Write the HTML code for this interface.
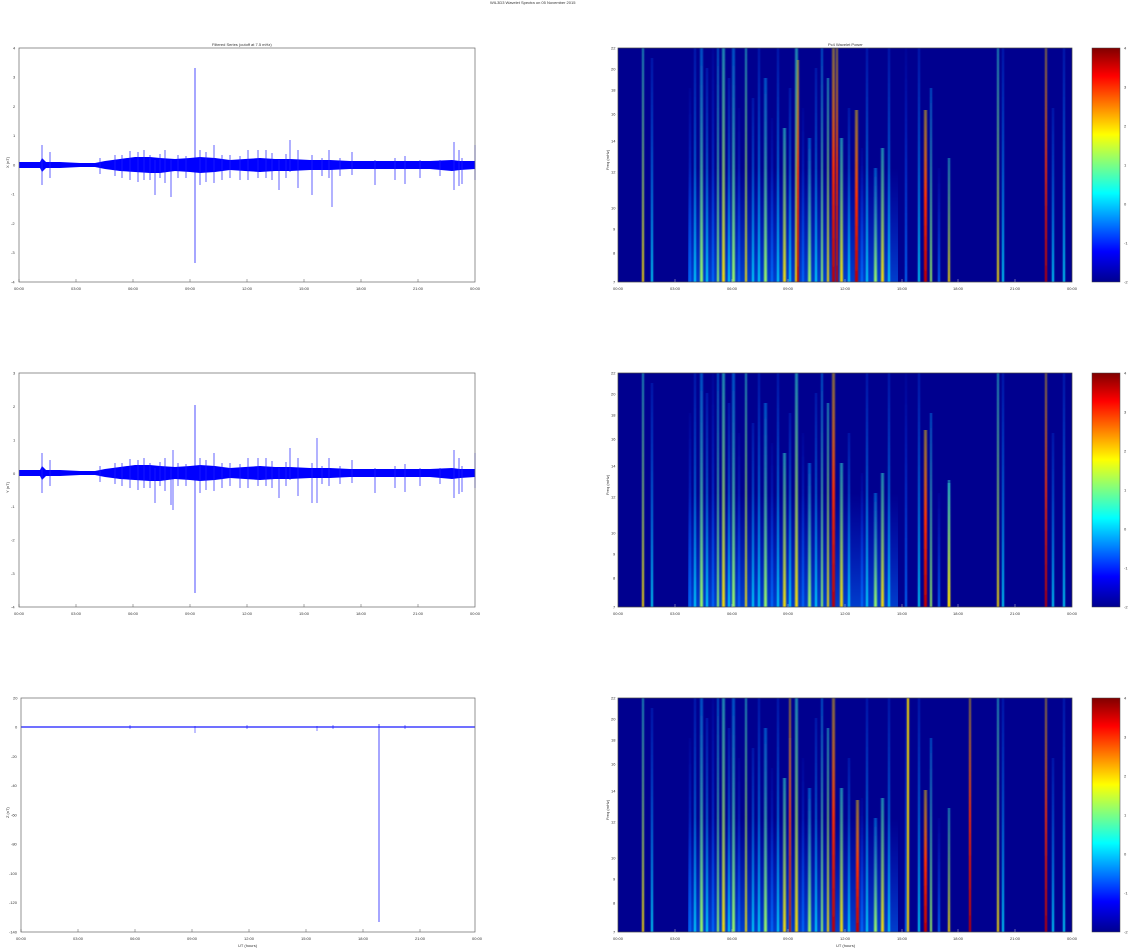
<!DOCTYPE html>
<html><head><meta charset="utf-8"><style>
html,body{margin:0;padding:0;background:#fff;width:1140px;height:949px;overflow:hidden}
svg text{font-family:"Liberation Sans",sans-serif;font-size:4px;fill:#333}
</style></head><body>
<svg width="1140" height="949" xmlns="http://www.w3.org/2000/svg">
<defs>
<filter id="bl" x="-0.05" y="0" width="1.1" height="1"><feGaussianBlur stdDeviation="0.7 0"/></filter>
<linearGradient id="cb" x1="0" y1="0" x2="0" y2="1">
<stop offset="0" stop-color="#800000"/><stop offset="0.12" stop-color="#ff0000"/><stop offset="0.37" stop-color="#ffff00"/><stop offset="0.62" stop-color="#00ffff"/><stop offset="0.87" stop-color="#0000ff"/><stop offset="1" stop-color="#00008f"/>
</linearGradient>
<linearGradient id="haze" x1="0" y1="0" x2="0" y2="1"><stop offset="0" stop-color="#0040ff" stop-opacity="0"/><stop offset="1" stop-color="#0070ff" stop-opacity="0.55"/></linearGradient>
<linearGradient id="gb" x1="0" y1="0" x2="0" y2="1"><stop offset="0" stop-color="#0040ff" stop-opacity="0.1"/><stop offset="1" stop-color="#0070ff"/></linearGradient>
<linearGradient id="gc" x1="0" y1="0" x2="0" y2="1"><stop offset="0" stop-color="#0060ff" stop-opacity="0.3"/><stop offset="1" stop-color="#00e0ff"/></linearGradient>
<linearGradient id="gg" x1="0" y1="0" x2="0" y2="1"><stop offset="0" stop-color="#00a0ff" stop-opacity="0.5"/><stop offset="1" stop-color="#a0ff60"/></linearGradient>
<linearGradient id="gy" x1="0" y1="0" x2="0" y2="1"><stop offset="0" stop-color="#30e0d0" stop-opacity="0.6"/><stop offset="1" stop-color="#ffe000"/></linearGradient>
<linearGradient id="gr" x1="0" y1="0" x2="0" y2="1"><stop offset="0" stop-color="#ffd000" stop-opacity="0.5"/><stop offset="0.5" stop-color="#ff3000"/><stop offset="1" stop-color="#c00000"/></linearGradient>
<g id="st">
<rect x="618" y="0" width="454" height="234" fill="#00008f"/>
<rect x="688" y="120" width="210" height="114" fill="url(#haze)"/>
<g filter="url(#bl)" opacity="0.95">
<rect x="642" y="0" width="2" height="234" fill="url(#gy)"/>
<rect x="651" y="10" width="2" height="224" fill="url(#gc)"/>
<rect x="689" y="40" width="2" height="194" fill="url(#gb)"/>
<rect x="694" y="0" width="2" height="234" fill="url(#gc)"/>
<rect x="700" y="0" width="3" height="234" fill="url(#gg)"/>
<rect x="706" y="20" width="2" height="214" fill="url(#gc)"/>
<rect x="712" y="0" width="2" height="234" fill="url(#gb)"/>
<rect x="717" y="0" width="2" height="234" fill="url(#gg)"/>
<rect x="722" y="0" width="3" height="234" fill="url(#gy)"/>
<rect x="728" y="30" width="2" height="204" fill="url(#gc)"/>
<rect x="732" y="0" width="3" height="234" fill="url(#gg)"/>
<rect x="738" y="60" width="2" height="174" fill="url(#gb)"/>
<rect x="745" y="0" width="2" height="234" fill="url(#gy)"/>
<rect x="752" y="50" width="2" height="184" fill="url(#gc)"/>
<rect x="758" y="0" width="2" height="234" fill="url(#gc)"/>
<rect x="764" y="30" width="3" height="204" fill="url(#gg)"/>
<rect x="771" y="70" width="2" height="164" fill="url(#gb)"/>
<rect x="777" y="0" width="2" height="234" fill="url(#gc)"/>
<rect x="783" y="80" width="3" height="154" fill="url(#gy)"/>
<rect x="789" y="40" width="2" height="194" fill="url(#gc)"/>
<rect x="795" y="0" width="3" height="234" fill="url(#gy)"/>
<rect x="802" y="60" width="2" height="174" fill="url(#gb)"/>
<rect x="808" y="90" width="3" height="144" fill="url(#gg)"/>
<rect x="815" y="20" width="2" height="214" fill="url(#gc)"/>
<rect x="821" y="0" width="2" height="234" fill="url(#gg)"/>
<rect x="827" y="30" width="2" height="204" fill="url(#gy)"/>
<rect x="832" y="0" width="3" height="234" fill="url(#gr)"/>
<rect x="840" y="90" width="3" height="144" fill="url(#gy)"/>
<rect x="848" y="60" width="2" height="174" fill="url(#gc)"/>
<rect x="861" y="100" width="2" height="134" fill="url(#gb)"/>
<rect x="866" y="0" width="2" height="234" fill="url(#gc)"/>
<rect x="874" y="120" width="3" height="114" fill="url(#gg)"/>
<rect x="881" y="100" width="3" height="134" fill="url(#gy)"/>
<rect x="888" y="0" width="2" height="234" fill="url(#gc)"/>
<rect x="905" y="0" width="2" height="234" fill="url(#gb)"/>
<rect x="918" y="0" width="2" height="234" fill="url(#gc)"/>
<rect x="930" y="40" width="2" height="194" fill="url(#gg)"/>
<rect x="938" y="120" width="2" height="114" fill="url(#gb)"/>
<rect x="948" y="110" width="2" height="124" fill="url(#gy)"/>
<rect x="997" y="0" width="2" height="234" fill="url(#gy)"/>
<rect x="1002" y="0" width="2" height="234" fill="url(#gc)"/>
<rect x="1045" y="0" width="2" height="234" fill="url(#gr)"/>
<rect x="1052" y="60" width="2" height="174" fill="url(#gc)"/>
<rect x="1063" y="0" width="2" height="234" fill="url(#gc)"/>
</g>
</g>
<g id="tx"><line x1="19" y1="0" x2="19" y2="-3" stroke="#555" stroke-width="0.5"/><line x1="76" y1="0" x2="76" y2="-3" stroke="#555" stroke-width="0.5"/><line x1="133" y1="0" x2="133" y2="-3" stroke="#555" stroke-width="0.5"/><line x1="190" y1="0" x2="190" y2="-3" stroke="#555" stroke-width="0.5"/><line x1="247" y1="0" x2="247" y2="-3" stroke="#555" stroke-width="0.5"/><line x1="304" y1="0" x2="304" y2="-3" stroke="#555" stroke-width="0.5"/><line x1="361" y1="0" x2="361" y2="-3" stroke="#555" stroke-width="0.5"/><line x1="418" y1="0" x2="418" y2="-3" stroke="#555" stroke-width="0.5"/>
<text x="14" y="8">00:00</text><text x="71" y="8">03:00</text><text x="128" y="8">06:00</text><text x="185" y="8">09:00</text><text x="242" y="8">12:00</text><text x="299" y="8">15:00</text><text x="356" y="8">18:00</text><text x="413" y="8">21:00</text><text x="470" y="8">00:00</text></g>
<g id="sx"><line x1="675" y1="0" x2="675" y2="-3" stroke="#ccc" stroke-width="0.5"/><line x1="732" y1="0" x2="732" y2="-3" stroke="#ccc" stroke-width="0.5"/><line x1="788" y1="0" x2="788" y2="-3" stroke="#ccc" stroke-width="0.5"/><line x1="845" y1="0" x2="845" y2="-3" stroke="#ccc" stroke-width="0.5"/><line x1="902" y1="0" x2="902" y2="-3" stroke="#ccc" stroke-width="0.5"/><line x1="958" y1="0" x2="958" y2="-3" stroke="#ccc" stroke-width="0.5"/><line x1="1015" y1="0" x2="1015" y2="-3" stroke="#ccc" stroke-width="0.5"/>
<text x="613" y="8">00:00</text><text x="670" y="8">03:00</text><text x="727" y="8">06:00</text><text x="783" y="8">09:00</text><text x="840" y="8">12:00</text><text x="897" y="8">15:00</text><text x="953" y="8">18:00</text><text x="1010" y="8">21:00</text><text x="1067" y="8">00:00</text></g>
<g id="fy"><text x="611" y="1.5">22</text><text x="611" y="22.5">20</text><text x="611" y="43.5">18</text><text x="611" y="67.5">16</text><text x="611" y="94.5">14</text><text x="611" y="125.5">12</text><text x="611" y="161.5">10</text><text x="613" y="182.5">9</text><text x="613" y="206.5">8</text><text x="613" y="235.5">7</text>
<text x="603" y="124" transform="rotate(-90 605 120)">Freq (mHz)</text>
<rect x="1092" y="0" width="28" height="234" fill="url(#cb)" stroke="#444" stroke-width="0.5"/>
<text x="1124" y="1.5">4</text><text x="1124" y="40.5">3</text><text x="1124" y="79.5">2</text><text x="1124" y="118.5">1</text><text x="1124" y="157.5">0</text><text x="1124" y="196.5">-1</text><text x="1124" y="235.5">-2</text>
<text x="1130" y="130" transform="rotate(-90 1133 120)">log (nT² /Hz)</text></g>
<g id="band">
<polygon fill="#0000ff" points="19,162 40,162 42,158 46,162 60,162 80,163 95,163 105,161 120,159 135,157 150,157 160,158 175,159 190,158 200,157 215,158 230,160 245,159 260,158 275,159 290,159 310,160 330,160 350,161 370,161 395,161 410,161 430,161 452,160 460,161 475,161 475,169 460,170 452,171 430,169 410,169 395,169 370,169 350,169 330,170 310,170 290,171 275,171 260,172 245,171 230,170 215,172 200,173 190,172 175,171 160,173 150,173 135,172 120,171 105,169 95,167 80,167 60,168 46,168 42,172 40,168 19,168"/>
<path stroke="#2020ff" stroke-width="0.7" fill="none" d="M42 145V185M50 152V178M100 158V174M115 155V176M122 155V178M130 151V180M138 152V182M144 150V180M150 155V180M155 160V195M160 154V178M165 150V183M171 160V197M178 155V178M186 156V178M200 150V185M206 152V182M214 145V183M222 155V180M230 155V178M240 156V180M248 150V180M258 150V178M266 150V178M272 153V180M279 160V190M286 154V178M290 140V172M298 150V188M312 155V195M322 158V176M329 150V178M340 158V176M352 152V175M375 160V185M395 158V180M405 156V184M420 160V178M440 160V176M454 142V190M459 150V186M462 158V184M475 145V180"/>
</g>
</defs>

<text x="490" y="4">WIL3D3 Wavelet Spectra on 05 November 2015</text>

<text x="212" y="46">Filtered Series (cutoff at 7.5 mHz)</text>
<use href="#band"/>
<line x1="195" y1="68" x2="195" y2="263" stroke="#0000ff" stroke-width="0.7"/>
<line x1="332" y1="165" x2="332" y2="207" stroke="#0000ff" stroke-width="0.6"/>
<rect x="19" y="48" width="456" height="234" fill="none" stroke="#666" stroke-width="0.7"/>
<g><text x="13" y="49.5">4</text><text x="13" y="78.7">3</text><text x="13" y="108">2</text><text x="13" y="137.2">1</text><text x="13" y="166.5">0</text><text x="11" y="195.7">-1</text><text x="11" y="225">-2</text><text x="11" y="254.2">-3</text><text x="11" y="283.5">-4</text></g>
<text x="3" y="168" transform="rotate(-90 6 165)">X (nT)</text>
<use href="#tx" y="282"/>

<use href="#band" y="308"/>
<line x1="195" y1="405" x2="195" y2="593" stroke="#0000ff" stroke-width="0.7"/>
<line x1="173" y1="450" x2="173" y2="510" stroke="#0000ff" stroke-width="0.6"/>
<line x1="317" y1="438" x2="317" y2="503" stroke="#0000ff" stroke-width="0.6"/>
<rect x="19" y="373" width="456" height="234" fill="none" stroke="#666" stroke-width="0.7"/>
<g><text x="13" y="374.5">3</text><text x="13" y="408">2</text><text x="13" y="441.4">1</text><text x="13" y="474.8">0</text><text x="11" y="508.2">-1</text><text x="11" y="541.6">-2</text><text x="11" y="575">-3</text><text x="11" y="608.5">-4</text></g>
<text x="3" y="493" transform="rotate(-90 6 490)">Y (nT)</text>
<use href="#tx" y="607"/>

<rect x="21" y="726.3" width="454" height="1.4" fill="#0000ff" opacity="0.8"/>
<path stroke="#0000ff" stroke-width="0.5" d="M130 725V729M195 726V733M247 725V729M317 726V731M333 725V729M405 725V729"/>
<line x1="379" y1="724" x2="379" y2="922" stroke="#0000ff" stroke-width="0.7"/>
<rect x="21" y="698" width="454" height="234" fill="none" stroke="#666" stroke-width="0.7"/>
<g><text x="13" y="699.5">20</text><text x="15" y="728.7">0</text><text x="11" y="758">-20</text><text x="11" y="787.2">-40</text><text x="11" y="816.5">-60</text><text x="11" y="845.7">-80</text><text x="9" y="875">-100</text><text x="9" y="904.2">-120</text><text x="9" y="933.5">-140</text></g>
<text x="3" y="818" transform="rotate(-90 6 815)">Z (nT)</text>
<use href="#tx" x="2" y="932"/>
<text x="238" y="947">UT (hours)</text>

<text x="828" y="46">Pc4 Wavelet Power</text>
<use href="#st" y="48"/>
<g filter="url(#bl)">
<rect x="855" y="110" width="3" height="172" fill="url(#gr)"/>
<rect x="924" y="110" width="3" height="172" fill="url(#gr)"/>
<rect x="836" y="48" width="2" height="234" fill="url(#gr)"/>
<rect x="797" y="60" width="2" height="222" fill="url(#gr)"/>
</g>
<rect x="618" y="48" width="454" height="234" fill="none" stroke="#444" stroke-width="0.7"/>
<use href="#sx" y="282"/>
<use href="#fy" y="48"/>

<use href="#st" y="373"/>
<g filter="url(#bl)">
<rect x="924" y="430" width="3" height="177" fill="url(#gr)"/>
<rect x="948" y="480" width="2" height="127" fill="url(#gy)"/>
</g>
<rect x="618" y="373" width="454" height="234" fill="none" stroke="#444" stroke-width="0.7"/>
<use href="#sx" y="607"/>
<use href="#fy" y="373"/>

<use href="#st" y="698"/>
<g filter="url(#bl)">
<rect x="924" y="790" width="3" height="142" fill="url(#gr)"/>
<rect x="969" y="698" width="2" height="234" fill="url(#gr)"/>
<rect x="856" y="800" width="3" height="132" fill="url(#gr)"/>
<rect x="789" y="698" width="2" height="234" fill="url(#gr)"/>
<rect x="907" y="698" width="2" height="234" fill="#ffe000"/>
</g>
<rect x="618" y="698" width="454" height="234" fill="none" stroke="#444" stroke-width="0.7"/>
<use href="#sx" y="932"/>
<use href="#fy" y="698"/>
<text x="836" y="947">UT (hours)</text>
</svg>
</body></html>
